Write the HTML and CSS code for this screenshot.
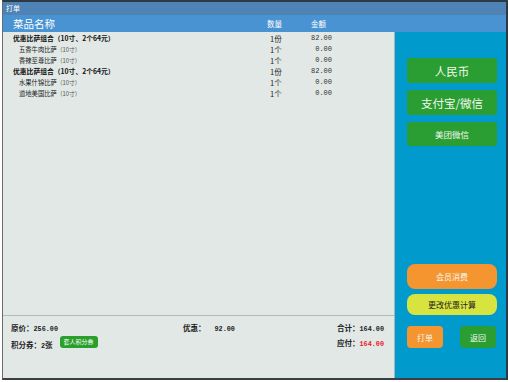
FILE: index.html
```html
<!DOCTYPE html>
<html lang="zh-CN">
<head>
    <meta charset="UTF-8">
    <title>打单</title>
    <link rel="stylesheet" href="styles.css">
</head>
<body>
    <div class="window">
        <div class="titlebar">打单</div>
        <div class="head">
            <div class="h-name">菜品名称</div>
            <div class="h-qty">数量</div>
            <div class="h-amt">金额</div>
        </div>
        <div class="main">
            <div class="left">
                <div class="list">
                    <div class="row combo">
                        <div class="name">优惠比萨组合（10寸、2个64元）</div>
                        <div class="qty">1份</div>
                        <div class="amt">82.00</div>
                    </div>
                    <div class="row sub">
                        <div class="name">五香牛肉比萨<span class="size">（10寸）</span></div>
                        <div class="qty">1个</div>
                        <div class="amt">0.00</div>
                    </div>
                    <div class="row sub">
                        <div class="name">香辣至尊比萨<span class="size">（10寸）</span></div>
                        <div class="qty">1个</div>
                        <div class="amt">0.00</div>
                    </div>
                    <div class="row combo">
                        <div class="name">优惠比萨组合（10寸、2个64元）</div>
                        <div class="qty">1份</div>
                        <div class="amt">82.00</div>
                    </div>
                    <div class="row sub">
                        <div class="name">水果什锦比萨<span class="size">（10寸）</span></div>
                        <div class="qty">1个</div>
                        <div class="amt">0.00</div>
                    </div>
                    <div class="row sub">
                        <div class="name">道地美国比萨<span class="size">（10寸）</span></div>
                        <div class="qty">1个</div>
                        <div class="amt">0.00</div>
                    </div>
                </div>
                <div class="summary">
                    <div class="col col-left">
                        <div class="line">原价：<span class="num">256.00</span></div>
                        <div class="line line2">
                            <span class="txt">积分券：<span class="num">2</span>张</span>
                            <span class="coupon">套人积分券</span>
                        </div>
                    </div>
                    <div class="col col-mid">
                        <div class="line">优惠：<span class="num gap">92.00</span></div>
                    </div>
                    <div class="col col-right">
                        <div class="line">合计：<span class="num">164.00</span></div>
                        <div class="line line2b">应付：<span class="num red">164.00</span></div>
                    </div>
                </div>
            </div>
            <div class="side">
                <div class="pay">
                    <div class="btn green big">人民币</div>
                    <div class="btn green big">支付宝/微信</div>
                    <div class="btn green small">美团微信</div>
                </div>
                <div class="extra">
                    <div class="btn orange pill">会员消费</div>
                    <div class="btn yellow pill short">更改优惠计算</div>
                    <div class="actions">
                        <div class="btn orange mini">打单</div>
                        <div class="btn green mini">返回</div>
                    </div>
                </div>
            </div>
        </div>
    </div>
</body>
</html>
```

FILE: styles.css
```css
body {
    margin: 0;
    background: #ffffff;
    font-family: "Noto Sans CJK SC", "DejaVu Sans", sans-serif;
}

.window {
    width: 503px;
    height: 376px;
    margin-left: 2px;
    border-top: 2px solid #2c3a48;
    border-right: 2px solid #2c3a48;
    border-bottom: 2px solid #3a3f44;
    border-left: 1px solid #6a6a6a;
    display: flex;
    flex-direction: column;
    background: #e1e8e5;
}

.titlebar {
    height: 13px;
    line-height: 13px;
    padding-left: 3px;
    background: #4f83b6;
    color: #ffffff;
    font-size: 7px;
}

.head {
    height: 17px;
    display: flex;
    align-items: center;
    background: #4a93d2;
    color: #ffffff;
}

.h-name {
    width: 254px;
    padding-left: 10px;
    font-size: 10.5px;
}

.h-qty {
    width: 44px;
    font-size: 7.5px;
}

.h-amt {
    font-size: 7.5px;
}

.main {
    flex: 1;
    display: flex;
}

.left {
    width: 391px;
    border-right: 1px solid #a9b6b6;
    display: flex;
    flex-direction: column;
}

.list {
    height: 282px;
    padding-top: 1px;
}

.row {
    display: flex;
    height: 11px;
    line-height: 11px;
    color: #222222;
}

.row .name {
    width: 257px;
    padding-left: 10px;
    font-size: 6.8px;
}

.combo .name {
    font-weight: bold;
    color: #111111;
}

.sub .name {
    padding-left: 16px;
    width: 251px;
    font-size: 6.3px;
}

.size {
    font-size: 5.8px;
    color: #555555;
}

.qty {
    width: 39px;
    font-size: 7.5px;
}

.amt {
    width: 23px;
    text-align: right;
    font-family: "Liberation Mono", monospace;
    font-size: 7px;
    color: #333333;
}

.summary {
    flex: 1;
    border-top: 1px solid #b4baba;
    display: flex;
    padding: 4px 10px 0 8px;
    font-size: 7.5px;
    font-weight: bold;
    color: #222222;
}

.num {
    font-family: "Liberation Mono", monospace;
    font-size: 6.8px;
}

.gap {
    margin-left: 9px;
}

.red {
    color: #e8202a;
}

.line {
    height: 15px;
    line-height: 15px;
}

.line2 {
    display: flex;
    align-items: flex-start;
    height: 14px;
    padding-top: 1px;
}

.line2 .txt {
    padding-top: 2px;
    line-height: 14px;
}

.coupon {
    margin-left: 7px;
    height: 12px;
    line-height: 12px;
    padding: 0 4px;
    background: #2b9f2b;
    color: #ffffff;
    border-radius: 3px;
    font-size: 6px;
    font-weight: normal;
}

.col-left {
    width: 172px;
}

.col-mid {
    flex: 1;
}

.col-right {
    text-align: right;
}

.line2b {
    line-height: 16px;
}

.side {
    flex: 1;
    background: #009acd;
    display: flex;
    flex-direction: column;
    padding: 26px 0 30px 12px;
}

.pay {
    display: flex;
    flex-direction: column;
    gap: 7px;
}

.btn {
    display: flex;
    align-items: center;
    justify-content: center;
    color: #f4f8f0;
}

.green {
    background: #2a9e32;
}

.orange {
    background: #f4952f;
}

.yellow {
    background: #d7e43f;
    color: #222222;
}

.big {
    width: 90px;
    height: 25px;
    border-radius: 3px;
    font-size: 11.5px;
}

.small {
    width: 90px;
    height: 24px;
    border-radius: 3px;
    font-size: 8.5px;
}

.extra {
    margin-top: auto;
    display: flex;
    flex-direction: column;
}

.pill {
    width: 90px;
    height: 25px;
    border-radius: 8px;
    font-size: 8px;
}

.short {
    height: 21px;
    margin-top: 5px;
}

.actions {
    display: flex;
    justify-content: space-between;
    width: 89px;
    margin-top: 11px;
}

.mini {
    width: 36px;
    height: 22px;
    border-radius: 4px;
    font-size: 8px;
}
```
